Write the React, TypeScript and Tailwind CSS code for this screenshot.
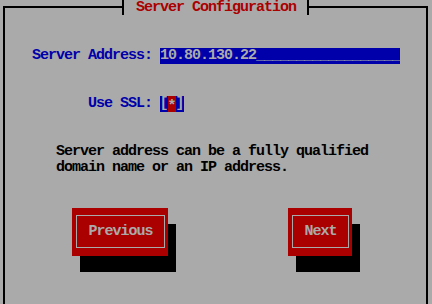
import React from "react";

function TuiButton({ label, width }: { label: string; width: string }) {
  return (
    <button
      className={`${width} h-[48px] bg-[#aa0000] shadow-[8px_16px_0_0_#000000] pt-[7px] pl-[4px] pr-[3px] pb-[8px] flex`}
    >
      <span className="flex-1 border border-[#aaaaaa] flex items-center justify-center text-[#aaaaaa]">
        {label}
      </span>
    </button>
  );
}

export default function App() {
  return (
    <div className="relative w-[432px] h-[304px] overflow-hidden bg-[#aaaaaa] font-['Liberation_Mono',monospace] font-bold text-[15px] leading-[16px] tracking-[-1px]">
      <div className="ml-[3px] mt-[6px] w-[425px] h-[298px] border-t-2 border-x-2 border-black flex flex-col">
        <div className="mt-[40px] h-[16px] flex pl-[27px]">
          <span className="w-[128px] text-[#0000aa] whitespace-pre">Server Address:</span>
          <span className="w-[240px] bg-[#0000aa] text-[#aaaaaa] whitespace-pre overflow-hidden">
            10.80.130.22__________________
          </span>
        </div>
        <div className="mt-[32px] h-[16px] flex pl-[83px]">
          <span className="w-[72px] text-[#0000aa] whitespace-pre">Use SSL:</span>
          <span className="flex bg-[#0000aa] text-[#aaaaaa] tracking-normal">
            <span className="w-[8px] flex justify-center">[</span>
            <span className="w-[8px] flex justify-center bg-[#aa0000]">
              <span className="relative top-[3px]">*</span>
            </span>
            <span className="w-[8px] flex justify-center">]</span>
          </span>
        </div>
        <div className="mt-[32px] pl-[51px] text-black whitespace-pre">
          <div className="h-[16px]">Server address can be a fully qualified</div>
          <div className="h-[16px]">domain name or an IP address.</div>
        </div>
        <div className="mt-[32px] flex pl-[67px] gap-[120px]">
          <TuiButton label="Previous" width="w-[96px]" />
          <TuiButton label="Next" width="w-[64px]" />
        </div>
      </div>
      <div className="absolute left-[122px] top-0 h-[15px] w-[187px] border-x-2 border-black bg-[#aaaaaa] pl-[12px] text-[#aa0000] whitespace-pre">
        Server Configuration
      </div>
    </div>
  );
}
